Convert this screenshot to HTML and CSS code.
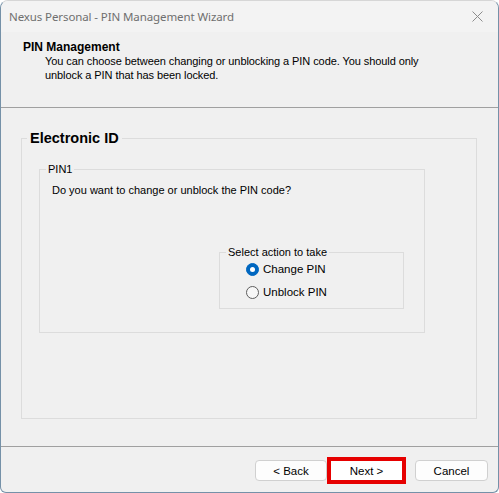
FILE: index.html
```html
<html>
	<head>
		<meta charset="utf-8" />
		<title>Nexus Personal - PIN Management Wizard</title>
		<link rel="stylesheet" href="styles.css">
	</head>
	<body>
		<div class="window">
			<div class="titlebar">
				<span class="title">Nexus Personal - PIN Management Wizard</span>
				<svg class="close" width="11" height="11" viewBox="0 0 11 11">
					<path d="M0.5 0.5 L10.5 10.5 M10.5 0.5 L0.5 10.5" stroke="#8c8c8c" stroke-width="1" fill="none" />
				</svg>
			</div>
			<div class="header">
				<div class="header-title">PIN Management</div>
				<div class="header-text">You can choose between changing or unblocking a PIN code. You should only unblock a PIN that has been locked.</div>
			</div>
			<div class="content">
				<fieldset class="group-outer">
					<legend class="legend-big">Electronic ID</legend>
					<fieldset class="group-pin">
						<legend>PIN1</legend>
						<p class="question">Do you want to change or unblock the PIN code?</p>
						<fieldset class="group-action">
							<legend>Select action to take</legend>
							<label class="radio-row"><span class="radio checked"></span>Change PIN</label>
							<label class="radio-row"><span class="radio"></span>Unblock PIN</label>
						</fieldset>
					</fieldset>
				</fieldset>
			</div>
			<div class="footer">
				<button class="btn" type="button">&lt; Back</button>
				<button class="btn btn-next" type="button">Next &gt;</button>
				<button class="btn btn-cancel" type="button">Cancel</button>
			</div>
		</div>
	</body>
</html>
```

FILE: styles.css
```css
body { margin: 0; background-color: #ffffff; font-family: "Liberation Sans", Arial, sans-serif; font-size: 11px; color: #000000; }

.window {
	width: 499px; height: 493px; box-sizing: border-box;
	display: flex; flex-direction: column;
	background-color: #f0f0f0;
	border: 1px solid #7591a8; border-top-color: #d6d6d6;
	border-radius: 8px 8px 6px 6px;
	overflow: hidden;
}

.titlebar {
	height: 31px; flex: none; display: flex; align-items: center; justify-content: space-between;
	padding: 0 15px 0 8px; background-color: #f3f3f3;
}
.title { font-family: "Noto Sans", "Open Sans", sans-serif; font-size: 11.5px; color: #6f6f6f; letter-spacing: -0.1px; }

.header { height: 76px; flex: none; box-sizing: border-box; padding: 8px 0 0 22px; border-bottom: 1px solid #a0a0a0; line-height: 14px; }
.header-title { font-weight: bold; font-size: 12px; }
.header-text { margin-left: 22px; max-width: 385px; letter-spacing: -0.08px; }

.content { flex: 1; display: flex; flex-direction: column; padding: 22px 21px 27px 20px; }

fieldset { margin: 0; min-width: 0; border: 1px solid #dcdcdc; }
legend { padding: 0 2px; line-height: 14px; }

.group-outer { flex: 1; padding: 16px 51px 0 17px; }
.legend-big { font-size: 14.5px; font-weight: bold; line-height: 16px; padding: 0 3px; margin-left: -12px; }

.group-pin { height: 171px; box-sizing: border-box; padding: 7px 0 0 12px; }
.group-pin > legend { margin-left: -6px; }
.question { margin: 0; line-height: 14px; }

.group-action { width: 185px; height: 64px; box-sizing: border-box; margin: 48px 0 0 167px; padding: 0 0 0 26px; }
.group-action > legend { margin-left: -20px; }

.radio-row { display: flex; align-items: center; height: 20px; margin-bottom: 3px; font-size: 11.5px; }
.radio {
	width: 13px; height: 13px; box-sizing: border-box; margin-right: 4px;
	border: 1px solid #5d5d5d; border-radius: 50%; background-color: #f7f7f7;
	display: flex; align-items: center; justify-content: center;
}
.radio.checked { border-color: #0067c0; background-color: #0067c0; }
.radio.checked::after { content: ""; width: 5px; height: 5px; border-radius: 50%; background-color: #ffffff; }

.footer { height: 46px; flex: none; box-sizing: border-box; display: flex; justify-content: flex-end; align-items: flex-start; padding: 10px 10px 0 0; border-top: 1px solid #a0a0a0; }
.btn {
	width: 72px; height: 21px; margin-top: 3px; box-sizing: border-box; padding: 0;
	background-color: #fdfdfd; border: 1px solid #d0d0d0; border-radius: 4px;
	font-family: "Liberation Sans", Arial, sans-serif; font-size: 11.5px; color: #000000;
}
.btn-next { width: 79px; height: 27px; margin-top: 0; border: 4px solid #e60000; border-radius: 0; background-color: #ffffff; }
.btn-cancel { width: 73px; margin-left: 9px; }
```
